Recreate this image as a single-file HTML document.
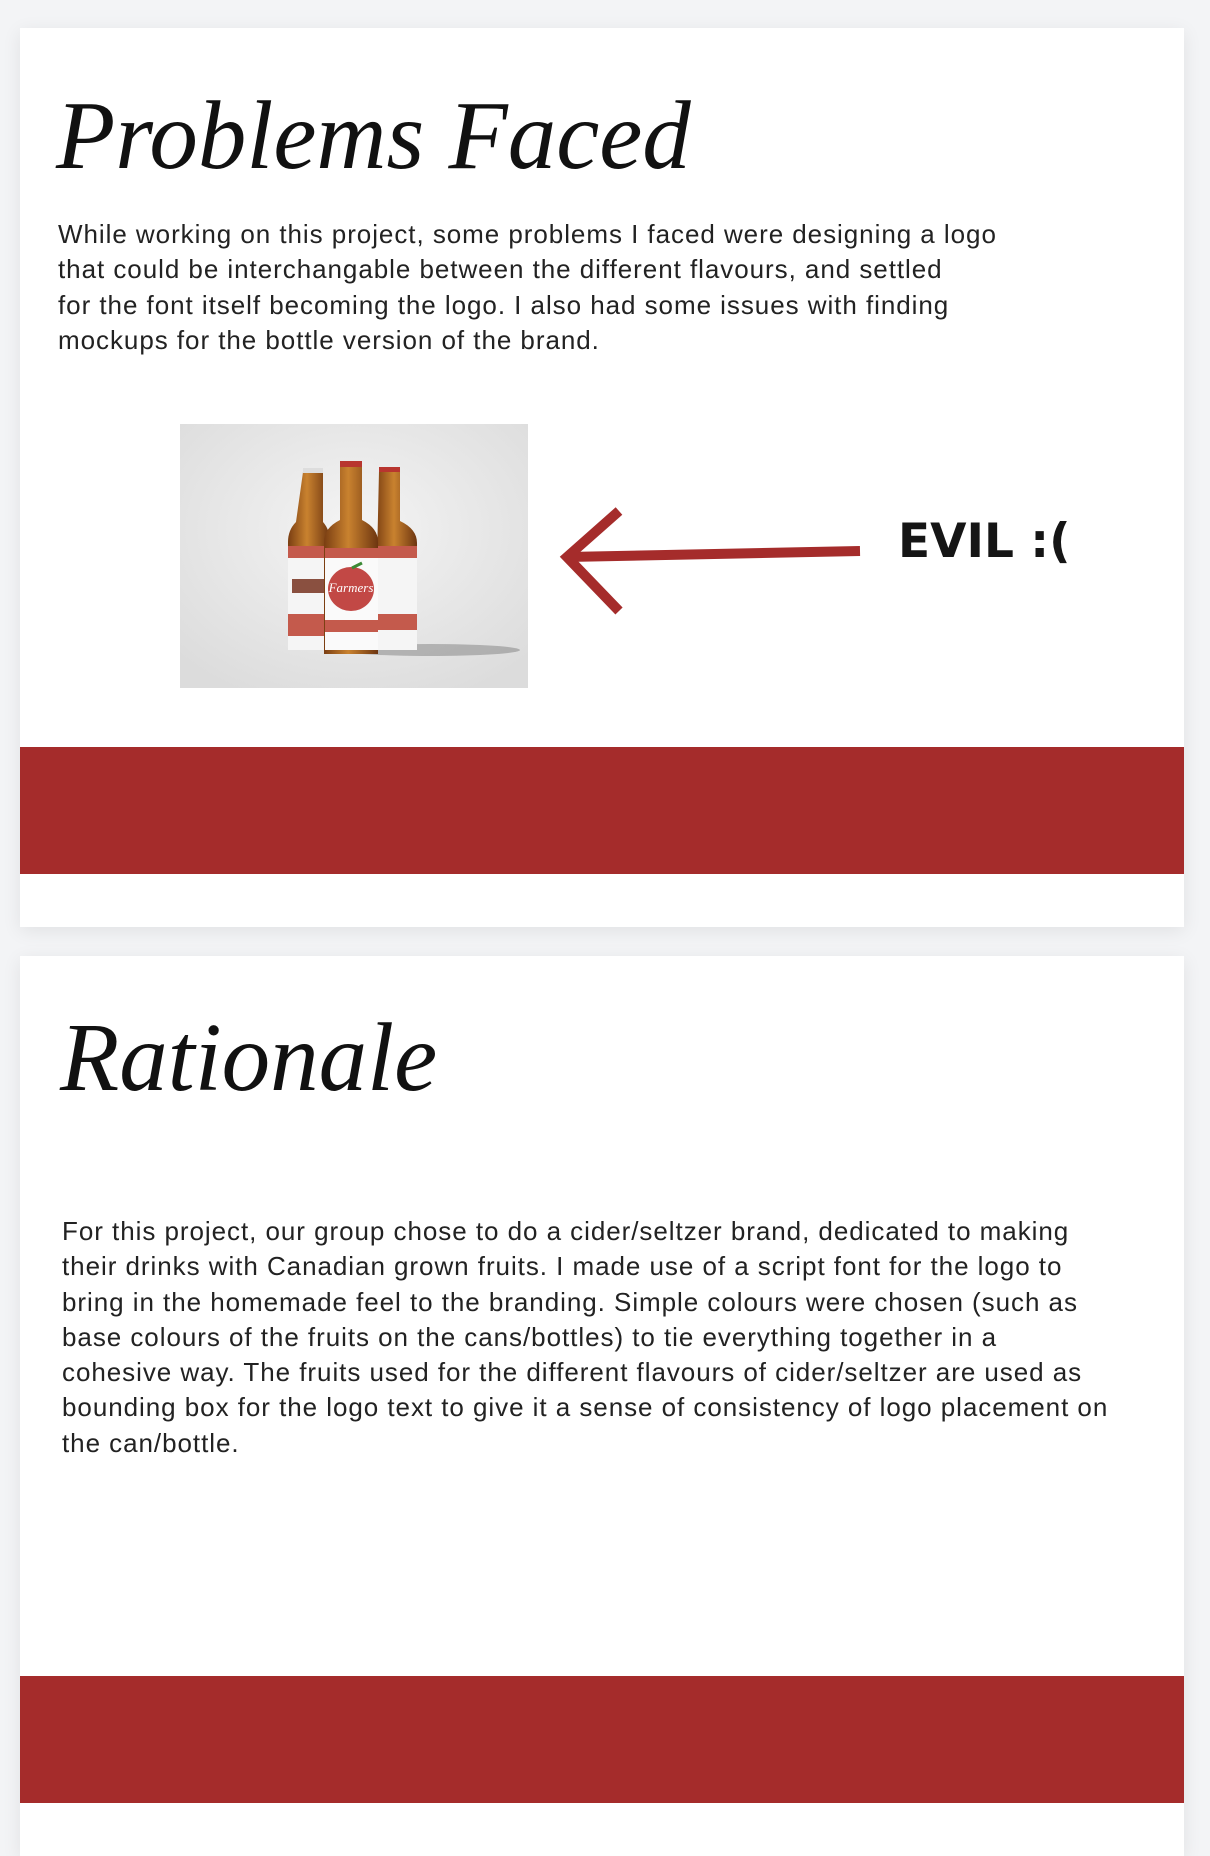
<!DOCTYPE html>
<html><head><meta charset="utf-8">
<style>
html,body{margin:0;padding:0;}
body{width:1210px;height:1844px;background:#f3f4f6;position:relative;overflow:hidden;font-family:"Liberation Sans",sans-serif;}
.card{position:absolute;left:20px;width:1164px;background:#fff;box-shadow:0 4px 18px rgba(0,0,0,0.08);}
.title{position:absolute;font-family:"Liberation Serif",serif;font-style:italic;color:#111;white-space:nowrap;}
.txt{position:absolute;font-size:26px;line-height:35.3px;color:#222;letter-spacing:0.95px;white-space:nowrap;}
.red{position:absolute;left:0;width:1164px;background:#a52c2b;}
</style></head><body>
<div class="card" style="top:28px;height:899px;">
  <div class="title" style="left:36px;top:52px;font-size:97px;">Problems Faced</div>
  <div class="txt" style="left:38px;top:189px;">While working on this project, some problems I faced were designing a logo<br>that could be interchangable between the different flavours, and settled<br>for the font itself becoming the logo. I also had some issues with finding<br>mockups for the bottle version of the brand.</div>
  <svg style="position:absolute;left:160px;top:396px" width="348" height="264" viewBox="0 0 348 264">
    <defs>
      <radialGradient id="bg" cx="50%" cy="40%" r="70%"><stop offset="0" stop-color="#f4f4f4"/><stop offset="1" stop-color="#dcdcdc"/></radialGradient>
      <linearGradient id="gl" x1="0" x2="1"><stop offset="0" stop-color="#7a3e12"/><stop offset=".45" stop-color="#c9822f"/><stop offset="1" stop-color="#6d3510"/></linearGradient>
    </defs>
    <rect width="348" height="264" fill="url(#bg)"/>
    <ellipse cx="250" cy="226" rx="90" ry="6" fill="#555" opacity=".35"/>
    <g fill="url(#gl)">
      <path d="M123 48h20v50q7 8 7 20v106h-42v-106q0-12 8-20z"/>
      <path d="M199 47h21v50q17 8 17 22v105h-42z"/>
    </g>
    <rect x="123" y="44" width="20" height="5" fill="#ddd"/>
    <rect x="199" y="43" width="21" height="5" fill="#b8352f"/>
    <rect x="108" y="122" width="42" height="104" fill="#f5f5f5"/>
    <rect x="195" y="122" width="42" height="104" fill="#f5f5f5"/>
    <rect x="108" y="122" width="42" height="12" fill="#c45a4c"/>
    <rect x="195" y="122" width="42" height="12" fill="#c45a4c"/>
    <rect x="108" y="190" width="42" height="22" fill="#c45a4c"/>
    <rect x="195" y="190" width="42" height="16" fill="#c45a4c"/>
    <rect x="112" y="155" width="34" height="14" fill="#8a5040"/>
    <path d="M160 42h22v54q16 8 16 22v112h-54v-112q0-14 16-22z" fill="url(#gl)"/>
    <rect x="160" y="37" width="22" height="6" fill="#b8352f"/>
    <rect x="145" y="124" width="53" height="102" fill="#fafafa"/>
    <rect x="145" y="124" width="53" height="10" fill="#c45a4c"/>
    <ellipse cx="171" cy="165" rx="23" ry="22" fill="#c24845"/>
    <path d="M172 144l10-5" stroke="#3c8a35" stroke-width="3"/>
    <text x="171" y="168" font-family="Liberation Serif" font-style="italic" font-size="13" fill="#fff" text-anchor="middle">Farmers</text>
    <rect x="145" y="196" width="53" height="12" fill="#c45a4c"/>
  </svg>
  <svg style="position:absolute;left:0;top:0" width="1164" height="700">
    <path d="M840 523L547 529" stroke="#a52c2b" stroke-width="10" fill="none"/>
    <path d="M599 483L547 529L599 583" stroke="#a52c2b" stroke-width="10" fill="none"/>
  </svg>
  <div style="position:absolute;left:878px;top:486px;font-family:'DejaVu Sans',sans-serif;font-weight:bold;font-size:47px;line-height:55px;color:#151515;">EVIL :(</div>
  <div class="red" style="top:719px;height:127px;"></div>
</div>
<div class="card" style="top:956px;height:900px;">
  <div class="title" style="left:40px;top:46px;font-size:97px;">Rationale</div>
  <div class="txt" style="left:42px;top:258px;">For this project, our group chose to do a cider/seltzer brand, dedicated to making<br>their drinks with Canadian grown fruits. I made use of a script font for the logo to<br>bring in the homemade feel to the branding. Simple colours were chosen (such as<br>base colours of the fruits on the cans/bottles) to tie everything together in a<br>cohesive way. The fruits used for the different flavours of cider/seltzer are used as<br>bounding box for the logo text to give it a sense of consistency of logo placement on<br>the can/bottle.</div>
  <div class="red" style="top:720px;height:127px;"></div>
</div>
</body></html>
